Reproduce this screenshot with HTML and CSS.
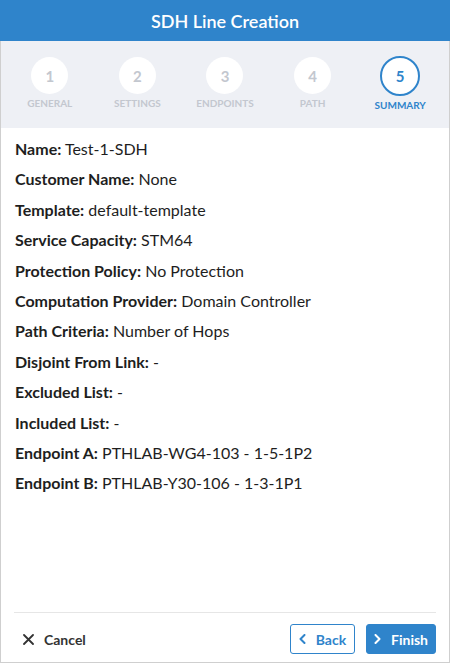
FILE: index.html
```html
<!DOCTYPE html>
<html>
<head>
<meta charset="utf-8">
<link rel="stylesheet" href="styles.css">
</head>
<body>
<div class="app">
  <header class="header">SDH Line Creation</header>
  <nav class="stepper">
    <div class="step"><div class="circle">1</div><div class="label">General</div></div>
    <div class="step"><div class="circle">2</div><div class="label">Settings</div></div>
    <div class="step"><div class="circle">3</div><div class="label">Endpoints</div></div>
    <div class="step"><div class="circle">4</div><div class="label">Path</div></div>
    <div class="step active"><div class="circle">5</div><div class="label">Summary</div></div>
  </nav>
  <main class="content">
    <div class="row"><b>Name:</b> Test-1-SDH</div>
    <div class="row"><b>Customer Name:</b> None</div>
    <div class="row"><b>Template:</b> default-template</div>
    <div class="row"><b>Service Capacity:</b> STM64</div>
    <div class="row"><b>Protection Policy:</b> No Protection</div>
    <div class="row"><b>Computation Provider:</b> Domain Controller</div>
    <div class="row"><b>Path Criteria:</b> Number of Hops</div>
    <div class="row"><b>Disjoint From Link:</b> -</div>
    <div class="row"><b>Excluded List:</b> -</div>
    <div class="row"><b>Included List:</b> -</div>
    <div class="row"><b>Endpoint A:</b> PTHLAB-WG4-103 - 1-5-1P2</div>
    <div class="row"><b>Endpoint B:</b> PTHLAB-Y30-106 - 1-3-1P1</div>
  </main>
  <footer class="footer">
    <button class="btn-cancel">
      <svg width="11" height="11" viewBox="0 0 11 11"><path d="M1 1L10 10M10 1L1 10" stroke="#333" stroke-width="1.8" fill="none" stroke-linecap="round"/></svg>
      <span>Cancel</span>
    </button>
    <div class="actions">
      <button class="btn btn-back">
        <svg width="7" height="10" viewBox="0 0 7 10"><path d="M5.5 1L1.5 5L5.5 9" stroke="#2f84cb" stroke-width="2" fill="none" stroke-linecap="round" stroke-linejoin="round"/></svg>
        <span>Back</span>
      </button>
      <button class="btn btn-finish">
        <svg width="7" height="10" viewBox="0 0 7 10"><path d="M1.5 1L5.5 5L1.5 9" stroke="#fff" stroke-width="2" fill="none" stroke-linecap="round" stroke-linejoin="round"/></svg>
        <span>Finish</span>
      </button>
    </div>
  </footer>
</div>
</body>
</html>
```

FILE: styles.css
```css
* { box-sizing: border-box; }
html, body { margin: 0; padding: 0; }
body {
  font-family: "Lato", "Liberation Sans", sans-serif;
  color: #222;
  background: #fff;
}
.app {
  width: 450px;
  height: 663px;
  display: flex;
  flex-direction: column;
  border: 1px solid #cfcfcf;
  border-top: none;
}
.header {
  height: 41px;
  background: #2f84cb;
  color: #fff;
  font-size: 18px;
  font-weight: 600;
  display: flex;
  align-items: center;
  justify-content: center;
  margin: 0 -1px;
}
.stepper {
  height: 87px;
  background: #eef0f5;
  display: grid;
  grid-template-columns: repeat(5, 1fr);
  padding: 16px 5px 0;
}
.step {
  display: flex;
  flex-direction: column;
  align-items: center;
}
.circle {
  width: 37px;
  height: 37px;
  border-radius: 50%;
  background: #fff;
  color: #c3c7cf;
  font-weight: 700;
  font-size: 15px;
  display: flex;
  align-items: center;
  justify-content: center;
}
.label {
  margin-top: 3px;
  font-size: 10px;
  font-weight: 700;
  text-transform: uppercase;
  color: #c3c7cf;
}
.step.active .circle {
  width: 40px;
  height: 40px;
  margin-top: -1px;
  border: 2px solid #2f84cb;
  color: #2f84cb;
}
.step.active .label {
  color: #2f84cb;
  margin-top: 3px;
}
.content {
  flex: 1;
  padding: 6px 14px 0;
}
.row {
  font-size: 16px;
  line-height: 30.4px;
  color: #1e1e1e;
}
.row b { font-weight: 700; }
.footer {
  margin: 0 13px;
  border-top: 1px solid #e6e6e6;
  display: flex;
  align-items: center;
  justify-content: space-between;
  padding: 11px 0 8px;
}
button {
  font-family: inherit;
  cursor: pointer;
}
.btn-cancel {
  background: none;
  border: none;
  padding: 0 0 0 9px;
  display: flex;
  align-items: center;
  gap: 10px;
  font-size: 14px;
  font-weight: 700;
  color: #333;
}
.actions {
  display: flex;
  gap: 11px;
}
.btn {
  height: 30px;
  border-radius: 3px;
  font-size: 14px;
  font-weight: 700;
  display: flex;
  align-items: center;
  justify-content: center;
  gap: 10px;
  padding: 0;
}
.btn-back {
  width: 65px;
  background: #fff;
  border: 1px solid #2f84cb;
  color: #2f84cb;
}
.btn-finish {
  width: 70px;
  background: #2f84cb;
  border: 1px solid #2f84cb;
  color: #fff;
}
```
